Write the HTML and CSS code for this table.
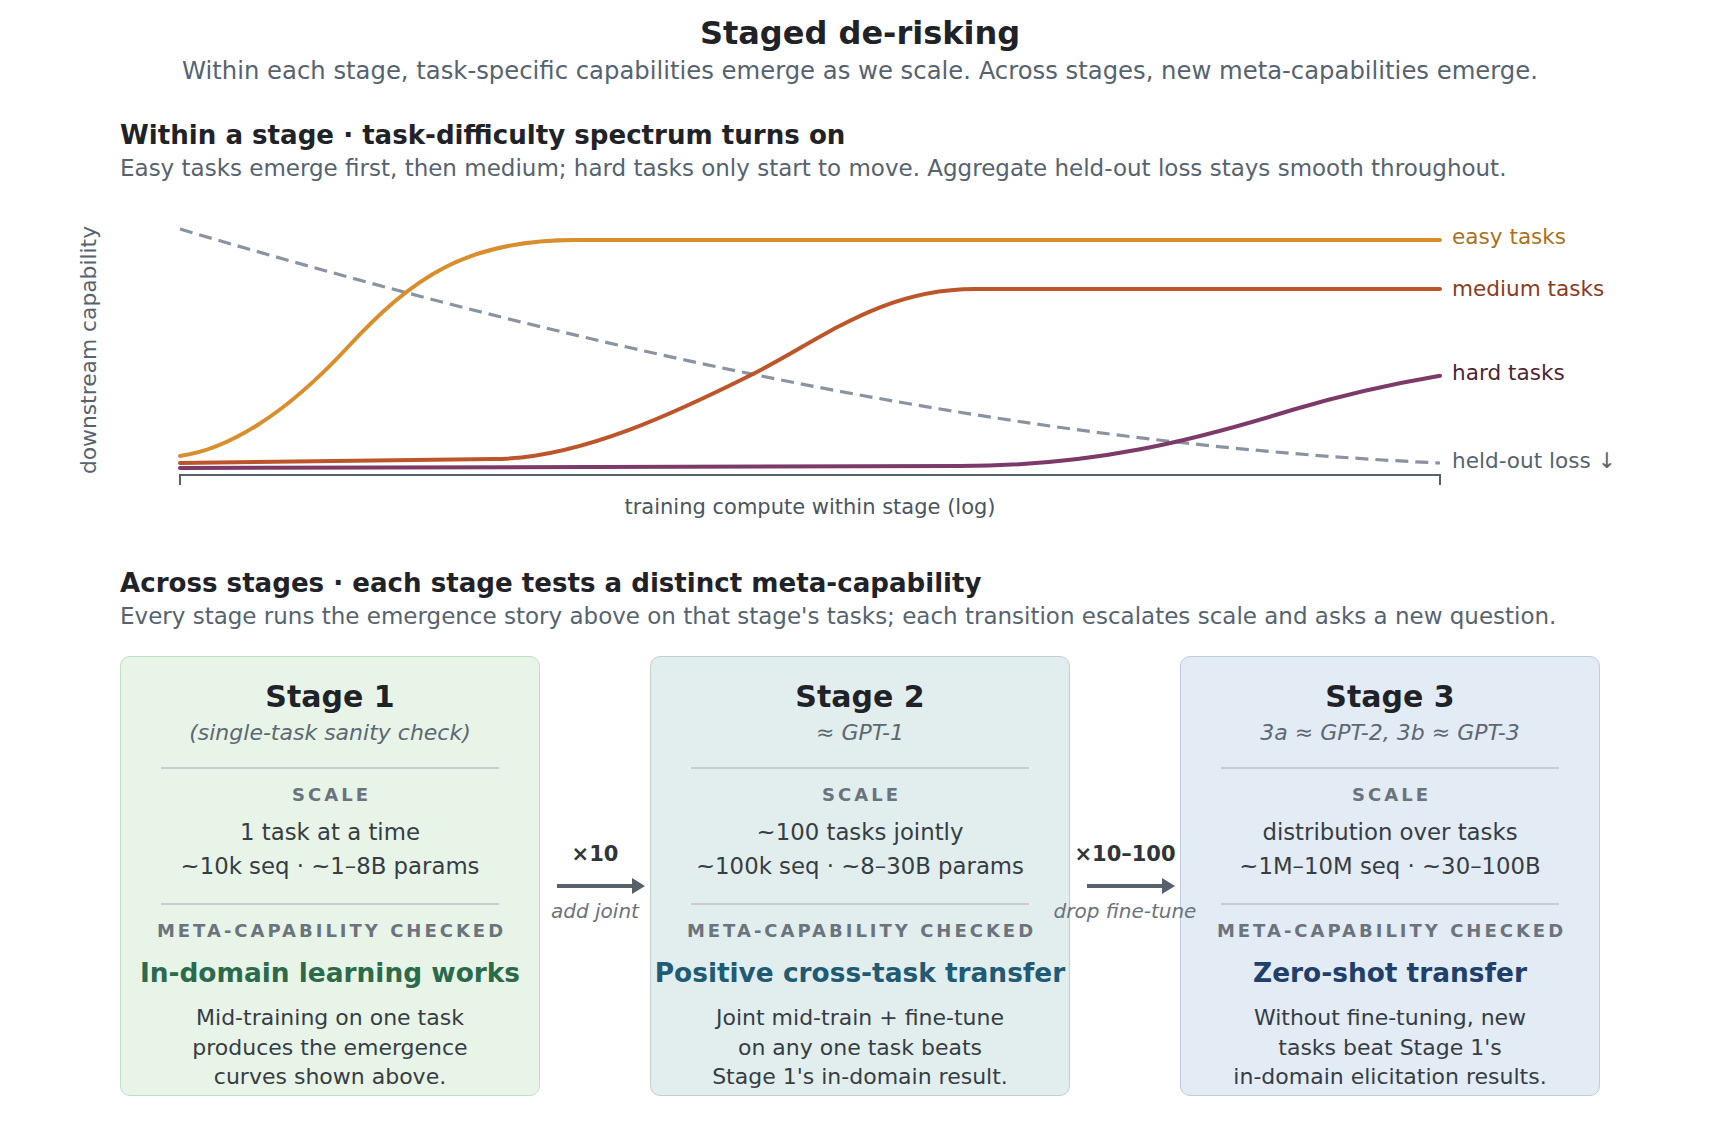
FILE: index.html
```html
<!DOCTYPE html>
<html lang="en">
<head>
<meta charset="utf-8">
<title>Staged de-risking</title>
<link rel="stylesheet" href="styles.css">
</head>
<body>
<main class="page">
  <header class="header">
    <h1 class="title">Staged de-risking</h1>
    <p class="subtitle">Within each stage, task-specific capabilities emerge as we scale. Across stages, new meta-capabilities emerge.</p>
  </header>

  <section class="section section--within">
    <h2 class="section-title">Within a stage · task-difficulty spectrum turns on</h2>
    <p class="section-desc">Easy tasks emerge first, then medium; hard tasks only start to move. Aggregate held-out loss stays smooth throughout.</p>
  </section>

  <svg class="chart" viewBox="0 200 1720 330" width="1720" height="330" role="img" aria-label="Emergence curves within a stage">
    <path class="curve curve--loss" d="M180,229 C600,353.7 1020,444 1440,463"/>
    <path class="curve curve--easy" d="M180,456 C225,450 282,418 347,348 C412,278 465,240 575,240 L1440,240"/>
    <path class="curve curve--medium" d="M180,463 L494,459 C580,459 681,410 751,375 C821,340 880,289 975,289 L1440,289"/>
    <path class="curve curve--hard" d="M180,468 L960,466 C1095,466 1195,440 1292,410 C1342,395 1390,384.2 1440,375.7"/>
    <path class="axis" d="M180,485 L180,475 L1440,475 L1440,485"/>
    <text class="chart-label label--easy" x="1452" y="244">easy tasks</text>
    <text class="chart-label label--medium" x="1452" y="296">medium tasks</text>
    <text class="chart-label label--hard" x="1452" y="380">hard tasks</text>
    <text class="chart-label label--loss" x="1452" y="468">held-out loss ↓</text>
    <text class="axis-label" x="810" y="514" text-anchor="middle">training compute within stage (log)</text>
    <text class="axis-label axis-label--y" transform="translate(96,350) rotate(-90)" text-anchor="middle">downstream capability</text>
  </svg>

  <section class="section section--across">
    <h2 class="section-title">Across stages · each stage tests a distinct meta-capability</h2>
    <p class="section-desc">Every stage runs the emergence story above on that stage's tasks; each transition escalates scale and asks a new question.</p>
  </section>

  <div class="stages">
    <article class="card card--s1">
      <h3 class="card-title">Stage 1</h3>
      <p class="card-sub">(single-task sanity check)</p>
      <hr class="card-rule">
      <p class="card-label">SCALE</p>
      <p class="card-scale">1 task at a time<br>~10k seq · ~1–8B params</p>
      <hr class="card-rule card-rule--lower">
      <p class="card-label card-label--meta">META-CAPABILITY CHECKED</p>
      <p class="card-head">In-domain learning works</p>
      <p class="card-desc">Mid-training on one task<br>produces the emergence<br>curves shown above.</p>
    </article>

    <div class="link">
      <span class="link-mult">×10</span>
      <svg class="link-arrow" viewBox="0 0 88 16" width="88" height="16" aria-hidden="true">
        <line x1="0" y1="8" x2="76" y2="8"/>
        <polygon points="75,0 88,8 75,16"/>
      </svg>
      <span class="link-note">add joint</span>
    </div>

    <article class="card card--s2">
      <h3 class="card-title">Stage 2</h3>
      <p class="card-sub">≈ GPT-1</p>
      <hr class="card-rule">
      <p class="card-label">SCALE</p>
      <p class="card-scale">~100 tasks jointly<br>~100k seq · ~8–30B params</p>
      <hr class="card-rule card-rule--lower">
      <p class="card-label card-label--meta">META-CAPABILITY CHECKED</p>
      <p class="card-head">Positive cross-task transfer</p>
      <p class="card-desc">Joint mid-train + fine-tune<br>on any one task beats<br>Stage 1's in-domain result.</p>
    </article>

    <div class="link">
      <span class="link-mult">×10–100</span>
      <svg class="link-arrow" viewBox="0 0 88 16" width="88" height="16" aria-hidden="true">
        <line x1="0" y1="8" x2="76" y2="8"/>
        <polygon points="75,0 88,8 75,16"/>
      </svg>
      <span class="link-note">drop fine-tune</span>
    </div>

    <article class="card card--s3">
      <h3 class="card-title">Stage 3</h3>
      <p class="card-sub">3a ≈ GPT-2, 3b ≈ GPT-3</p>
      <hr class="card-rule">
      <p class="card-label">SCALE</p>
      <p class="card-scale">distribution over tasks<br>~1M–10M seq · ~30–100B</p>
      <hr class="card-rule card-rule--lower">
      <p class="card-label card-label--meta">META-CAPABILITY CHECKED</p>
      <p class="card-head">Zero-shot transfer</p>
      <p class="card-desc">Without fine-tuning, new<br>tasks beat Stage 1's<br>in-domain elicitation results.</p>
    </article>
  </div>
</main>
</body>
</html>
```

FILE: styles.css
```css
* {
  box-sizing: border-box;
  margin: 0;
  padding: 0;
}

body {
  margin: 0;
  background: #ffffff;
  font-family: "DejaVu Sans", "Liberation Sans", sans-serif;
  color: #1f2328;
}

.page {
  width: 1720px;
  padding-top: 13px;
}

.header {
  text-align: center;
}

.title {
  font-size: 32px;
  line-height: 40px;
  font-weight: bold;
  color: #1f2328;
}

.subtitle {
  margin-top: 3px;
  font-size: 24.3px;
  line-height: 30px;
  color: #56636f;
}

.section {
  width: 1480px;
  margin: 0 auto;
}

.section--within {
  margin-top: 33px;
}

.section--across {
  margin-top: 36.5px;
}

.section-title {
  font-size: 26.1px;
  line-height: 32px;
  font-weight: bold;
  color: #1f2328;
}

.section-desc {
  margin-top: 2px;
  font-size: 23px;
  line-height: 30px;
  color: #56636f;
}

/* chart */
.chart {
  display: block;
  margin-top: 17px;
  width: 1720px;
  height: 330px;
}

.curve {
  fill: none;
  stroke-linecap: round;
  stroke-linejoin: round;
}

.curve--loss {
  stroke: #8a94a0;
  stroke-width: 3.2px;
  stroke-dasharray: 13 7;
  stroke-linecap: butt;
}

.curve--easy {
  stroke: #d98e2e;
  stroke-width: 4px;
}

.curve--medium {
  stroke: #bd552a;
  stroke-width: 4px;
}

.curve--hard {
  stroke: #7b3a67;
  stroke-width: 4px;
}

.axis {
  fill: none;
  stroke: #56616b;
  stroke-width: 2px;
}

.chart-label {
  font-family: "DejaVu Sans", sans-serif;
  font-size: 21.6px;
}

.label--easy { fill: #a87222; }
.label--medium { fill: #8c3c1c; }
.label--hard { fill: #4f2333; }
.label--loss { fill: #56636e; }

.axis-label {
  font-family: "DejaVu Sans", sans-serif;
  font-size: 21px;
  fill: #4a5560;
}

.axis-label--y {
  font-size: 21.8px;
  fill: #56636f;
}

/* stages */
.stages {
  width: 1480px;
  margin: 25px auto 0;
  display: grid;
  grid-template-columns: 420px 110px 420px 110px 420px;
}

.card {
  height: 440px;
  border: 1.5px solid #c4dcc6;
  border-radius: 10px;
  text-align: center;
  padding-top: 22px;
  color: #363d44;
}

.card--s1 {
  background: #e8f4e8;
  border-color: #c4dcc6;
}

.card--s2 {
  background: #e2eeed;
  border-color: #bdd1d1;
}

.card--s3 {
  background: #e3ebf5;
  border-color: #bdcce0;
}

.card-title {
  font-size: 30px;
  line-height: 36px;
  font-weight: bold;
  color: #1f2328;
}

.card-sub {
  margin-top: 3px;
  font-size: 22px;
  line-height: 30px;
  font-style: italic;
  color: #5c6873;
}

.card-rule {
  margin: 19px 40px 0;
  height: 2px;
  border: 0;
  background: #c7cdd3;
}

.card-rule--lower {
  margin-top: 20px;
}

.card-label {
  margin-top: 14.5px;
  font-size: 18px;
  line-height: 24px;
  font-weight: bold;
  letter-spacing: 3px;
  padding-left: 3px;
  color: #6b737c;
  white-space: nowrap;
}

.card-label--meta {
  margin-top: 14px;
}

.card-scale {
  margin-top: 8px;
  font-size: 22.8px;
  line-height: 34px;
  color: #363d44;
}

.card-head {
  margin-top: 13px;
  font-size: 26.4px;
  line-height: 34px;
  font-weight: bold;
  white-space: nowrap;
}

.card--s1 .card-head { color: #2b6a4a; }
.card--s2 .card-head { color: #215a73; }
.card--s3 .card-head { color: #213f6b; }

.card-desc {
  margin-top: 13px;
  font-size: 22px;
  line-height: 29.5px;
  color: #363d44;
}

/* connectors between stages */
.link {
  position: relative;
  z-index: 1;
  display: flex;
  flex-direction: column;
  align-items: center;
  padding-top: 185px;
}

.link-mult {
  font-size: 21px;
  line-height: 26px;
  font-weight: bold;
  color: #2f353b;
  white-space: nowrap;
}

.link-arrow {
  display: block;
  margin-top: 11px;
  margin-left: 11px;
}

.link-arrow line {
  stroke: #56616b;
  stroke-width: 4px;
}

.link-arrow polygon {
  fill: #56616b;
}

.link-note {
  margin-top: 4.5px;
  font-size: 20px;
  line-height: 26px;
  font-style: italic;
  color: #6b737c;
  white-space: nowrap;
}
```
